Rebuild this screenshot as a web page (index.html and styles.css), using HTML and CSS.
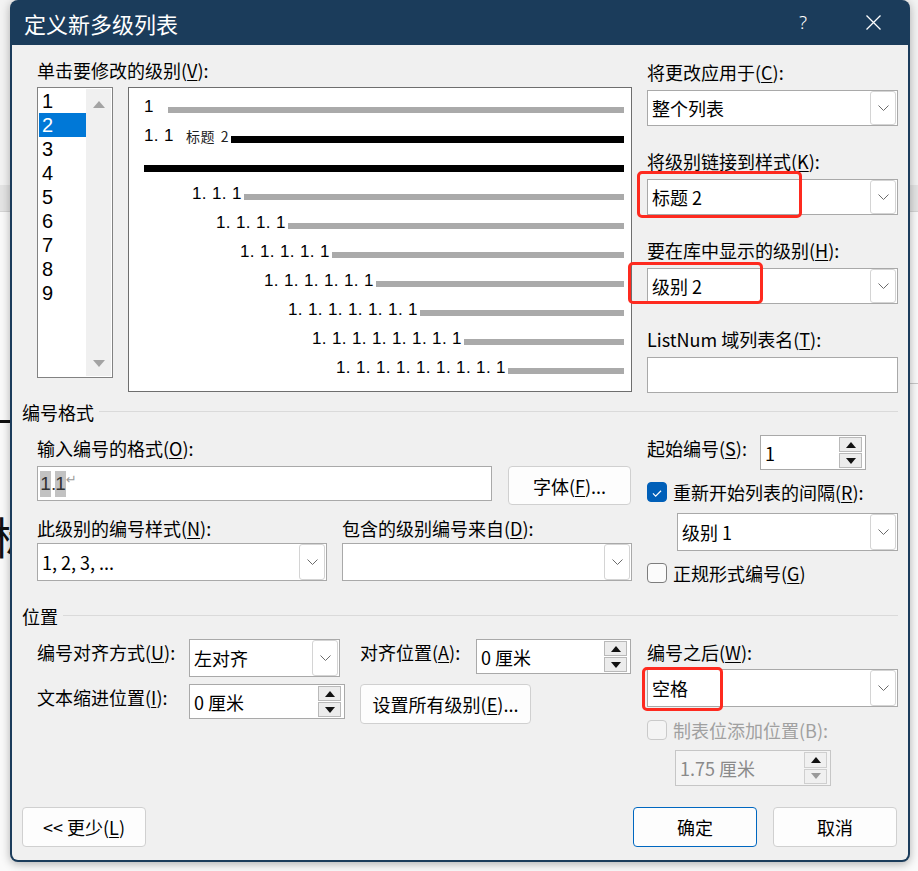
FILE: index.html
```html
<!DOCTYPE html>
<html lang="zh-CN">
<head>
<meta charset="utf-8">
<title>定义新多级列表</title>
<link rel="stylesheet" href="styles.css">
</head>
<body>
<div class="desk">
  <div class="bg-top"></div>
  <div class="bg-band"></div>
  <div class="bg-rule"></div>
  <div class="bg-char">标</div>
  <div class="bg-rline"></div>

  <div class="dialog">
    <div class="titlebar">
      <span class="title">定义新多级列表</span>
      <span class="tb-help">?</span>
      <span class="tb-close"><svg width="15" height="15" viewBox="0 0 15 15"><path d="M0.5 0.5L14.5 14.5M14.5 0.5L0.5 14.5" stroke="#fff" stroke-width="1.3" fill="none"/></svg></span>
    </div>

    <div class="body">
      <section class="top">
        <div class="top-left">
          <div class="lbl">单击要修改的级别(<u>V</u>):</div>
          <div class="levels">
            <div class="levlist">
              <div class="items">
                <div class="item">1</div>
                <div class="item sel">2</div>
                <div class="item">3</div>
                <div class="item">4</div>
                <div class="item">5</div>
                <div class="item">6</div>
                <div class="item">7</div>
                <div class="item">8</div>
                <div class="item">9</div>
              </div>
              <div class="vscroll"><span class="arr-up"></span><span class="arr-dn"></span></div>
            </div>
            <div class="preview">
              <div class="prow"><span class="pnum w24">1</span><span class="bar grey"></span></div>
              <div class="prow"><span class="pnum w42">1. 1</span><span class="pstyle">标题 2</span><span class="bar black"></span></div>
              <div class="prow"><span class="bar black"></span></div>
              <div class="prow i1"><span class="pnum">1. 1. 1</span><span class="bar grey"></span></div>
              <div class="prow i2"><span class="pnum">1. 1. 1. 1</span><span class="bar grey"></span></div>
              <div class="prow i3"><span class="pnum">1. 1. 1. 1. 1</span><span class="bar grey"></span></div>
              <div class="prow i4"><span class="pnum">1. 1. 1. 1. 1. 1</span><span class="bar grey"></span></div>
              <div class="prow i5"><span class="pnum">1. 1. 1. 1. 1. 1. 1</span><span class="bar grey"></span></div>
              <div class="prow i6"><span class="pnum">1. 1. 1. 1. 1. 1. 1. 1</span><span class="bar grey"></span></div>
              <div class="prow i7"><span class="pnum">1. 1. 1. 1. 1. 1. 1. 1. 1</span><span class="bar grey"></span></div>
            </div>
          </div>
        </div>

        <div class="top-right">
          <div class="field">
            <div class="lbl">将更改应用于(<u>C</u>):</div>
            <div class="combo"><span class="ctext">整个列表</span><span class="dd"><svg width="11" height="6" viewBox="0 0 11 6"><polyline points="0.5,0.5 5.5,5.5 10.5,0.5" fill="none" stroke="#6b6b6b" stroke-width="1"/></svg></span></div>
          </div>
          <div class="field">
            <div class="lbl">将级别链接到样式(<u>K</u>):</div>
            <div class="combo marked"><span class="ctext">标题 2</span><span class="dd"><svg width="11" height="6" viewBox="0 0 11 6"><polyline points="0.5,0.5 5.5,5.5 10.5,0.5" fill="none" stroke="#6b6b6b" stroke-width="1"/></svg></span><span class="redbox rb1"></span></div>
          </div>
          <div class="field">
            <div class="lbl">要在库中显示的级别(<u>H</u>):</div>
            <div class="combo marked"><span class="ctext">级别 2</span><span class="dd"><svg width="11" height="6" viewBox="0 0 11 6"><polyline points="0.5,0.5 5.5,5.5 10.5,0.5" fill="none" stroke="#6b6b6b" stroke-width="1"/></svg></span><span class="redbox rb2"></span></div>
          </div>
          <div class="field">
            <div class="lbl">ListNum 域列表名(<u>T</u>):</div>
            <div class="textbox listnum"></div>
          </div>
        </div>
      </section>

      <section class="group g-fmt">
        <div class="ghead"><span>编号格式</span><i class="gline"></i></div>
        <div class="gcols">
          <div class="gleft">
            <div class="lbl mt12">输入编号的格式(<u>O</u>):</div>
            <div class="fmtrow">
              <div class="textbox fmtbox"><span class="hl">1</span><span class="dot">.</span><span class="hl">1</span><span class="ret">↵</span></div>
              <div class="btn fontbtn">字体(<u>F</u>)...</div>
            </div>
            <div class="pair">
              <div>
                <div class="lbl">此级别的编号样式(<u>N</u>):</div>
                <div class="combo tall"><span class="ctext">1, 2, 3, ...</span><span class="dd"><svg width="11" height="6" viewBox="0 0 11 6"><polyline points="0.5,0.5 5.5,5.5 10.5,0.5" fill="none" stroke="#6b6b6b" stroke-width="1"/></svg></span></div>
              </div>
              <div>
                <div class="lbl">包含的级别编号来自(<u>D</u>):</div>
                <div class="combo tall"><span class="ctext"></span><span class="dd"><svg width="11" height="6" viewBox="0 0 11 6"><polyline points="0.5,0.5 5.5,5.5 10.5,0.5" fill="none" stroke="#6b6b6b" stroke-width="1"/></svg></span></div>
              </div>
            </div>
          </div>
          <div class="gright">
            <div class="startrow">
              <span class="lbl startlbl">起始编号(<u>S</u>):</span>
              <div class="spin startspin"><span class="stext">1</span><span class="sbtns"><span class="sb"><i class="up"></i></span><span class="sb"><i class="dn"></i></span></span></div>
            </div>
            <div class="chk-row"><span class="chk on"><svg width="20" height="20" viewBox="0 0 20 20"><polyline points="5.5,10.5 8.5,13.5 14.5,7.5" fill="none" stroke="#fff" stroke-width="1.3"/></svg></span><span>重新开始列表的间隔(<u>R</u>):</span></div>
            <div class="combo tall restart"><span class="ctext">级别 1</span><span class="dd"><svg width="11" height="6" viewBox="0 0 11 6"><polyline points="0.5,0.5 5.5,5.5 10.5,0.5" fill="none" stroke="#6b6b6b" stroke-width="1"/></svg></span></div>
            <div class="chk-row"><span class="chk"></span><span>正规形式编号(<u>G</u>)</span></div>
          </div>
        </div>
      </section>

      <section class="group g-pos">
        <div class="ghead"><span>位置</span><i class="gline"></i></div>
        <div class="gcols">
          <div class="posgrid">
            <div class="lbl plbl c1">编号对齐方式(<u>U</u>):</div>
            <div class="combo tall alignc c2"><span class="ctext">左对齐</span><span class="dd"><svg width="11" height="6" viewBox="0 0 11 6"><polyline points="0.5,0.5 5.5,5.5 10.5,0.5" fill="none" stroke="#6b6b6b" stroke-width="1"/></svg></span></div>
            <div class="lbl plbl c4">对齐位置(<u>A</u>):</div>
            <div class="spin c5"><span class="stext">0 厘米</span><span class="sbtns"><span class="sb"><i class="up"></i></span><span class="sb"><i class="dn"></i></span></span></div>
            <div class="lbl plbl c1">文本缩进位置(<u>I</u>):</div>
            <div class="spin c2"><span class="stext">0 厘米</span><span class="sbtns"><span class="sb"><i class="up"></i></span><span class="sb"><i class="dn"></i></span></span></div>
            <div class="btn allbtn c45">设置所有级别(<u>E</u>)...</div>
          </div>
          <div class="gright">
            <div class="lbl mt12">编号之后(<u>W</u>):</div>
            <div class="combo tall marked after"><span class="ctext">空格</span><span class="dd"><svg width="11" height="6" viewBox="0 0 11 6"><polyline points="0.5,0.5 5.5,5.5 10.5,0.5" fill="none" stroke="#6b6b6b" stroke-width="1"/></svg></span><span class="redbox rb3"></span></div>
            <div class="chk-row dis mt11"><span class="chk"></span><span>制表位添加位置(B):</span></div>
            <div class="spin disabled tabspin"><span class="stext">1.75 厘米</span><span class="sbtns"><span class="sb"><i class="up"></i></span><span class="sb"><i class="dn"></i></span></span></div>
          </div>
        </div>
      </section>

      <div class="footer">
        <div class="btn fbtn">&lt;&lt; 更少(<u>L</u>)</div>
        <div class="btn fbtn ok">确定</div>
        <div class="btn fbtn cancel">取消</div>
      </div>
    </div>
  </div>
</div>
</body>
</html>
```

FILE: styles.css
```css
* { box-sizing: border-box; }
html, body { margin: 0; padding: 0; }
body {
  width: 918px;
  height: 871px;
  overflow: hidden;
  font-family: "Noto Sans CJK SC", "Noto Sans", sans-serif;
  font-size: 18px;
  color: #000;
}
u { text-decoration-thickness: 1px; text-underline-offset: 2px; }

/* desktop behind the dialog */
.desk { position: relative; width: 918px; height: 871px; background: #fafafa; overflow: hidden; }
.bg-top { height: 185px; background: #f3f3f3; }
.bg-band { height: 27px; background: #e4e4e4; border-bottom: 1px solid #d4d4d4; }
.bg-rule { position: absolute; left: 0; top: 420px; width: 12px; height: 3px; background: #111; }
.bg-char { position: absolute; left: -9px; top: 514px; font-size: 44px; line-height: 1; color: #111; }
.bg-rline { position: absolute; right: 0; top: 383px; width: 12px; height: 1px; background: #c8c8c8; }

/* dialog frame */
.dialog {
  position: absolute;
  left: 10px;
  top: 0;
  width: 900px;
  height: 862px;
  background: #1b3c5b;
  border-radius: 8px;
  padding: 0 2px 2px;
  display: flex;
  flex-direction: column;
  box-shadow: 0 2px 10px rgba(0, 0, 0, 0.3);
}
.titlebar { height: 45px; flex: none; display: flex; align-items: center; color: #fff; }
.title { font-size: 22px; line-height: 1; padding-left: 12px; }
.tb-help { margin-left: auto; width: 70px; text-align: center; font-family: "Noto Sans", sans-serif; font-weight: 300; font-size: 19px; line-height: 1; }
.tb-close { width: 70px; display: flex; justify-content: center; align-items: center; }

.body { flex: 1; background: #f0f0f0; border-radius: 0 0 6px 6px; }

.lbl { line-height: 24px; white-space: nowrap; }

/* top section */
.top {
  height: 355px;
  display: grid;
  grid-template-columns: 595px 251px;
  column-gap: 15px;
  padding: 13px 10px 0 25px;
}
.levels { display: flex; gap: 15px; margin-top: 5px; }

.levlist {
  width: 76px;
  height: 291px;
  border: 1px solid #828282;
  background: #fff;
  display: flex;
  padding: 1px;
}
.items { width: 47px; }
.item {
  height: 24px;
  line-height: 24px;
  padding-left: 3px;
  font-family: "Liberation Sans", Arial, sans-serif;
  font-size: 20px;
}
.item.sel { background: #0078d7; color: #fff; }
.vscroll {
  width: 25px;
  background: #f0f0f0;
  display: flex;
  flex-direction: column;
  justify-content: space-between;
  align-items: center;
  padding: 12px 0 9px;
}
.arr-up { width: 0; height: 0; border-left: 6px solid transparent; border-right: 6px solid transparent; border-bottom: 7px solid #a3a3a3; }
.arr-dn { width: 0; height: 0; border-left: 6px solid transparent; border-right: 6px solid transparent; border-top: 7px solid #a3a3a3; }

.preview {
  width: 504px;
  height: 305px;
  border: 1px solid #6e6e6e;
  background: #fff;
  padding: 0 7px 0 15px;
}
.prow { height: 29px; display: flex; align-items: flex-end; }
.pnum {
  flex: none;
  font-family: "Liberation Sans", Arial, sans-serif;
  font-size: 17px;
  line-height: 20px;
  letter-spacing: 0.37px;
  white-space: pre;
  margin-right: 2px;
}
.pnum.w24 { width: 24px; margin-right: 0; }
.pnum.w42 { width: 42px; margin-right: 0; }
.pstyle { flex: none; font-size: 14px; line-height: 20px; margin-right: 2px; color: #222; letter-spacing: 0.5px; word-spacing: 2px; }
.bar { flex: 1; height: 6px; margin-bottom: 4px; }
.bar.grey { background: #aaaaaa; }
.bar.black { background: #000; height: 7px; margin-bottom: 3px; }
.prow.i1 { padding-left: 48px; }
.prow.i2 { padding-left: 72px; }
.prow.i3 { padding-left: 96px; }
.prow.i4 { padding-left: 120px; }
.prow.i5 { padding-left: 144px; }
.prow.i6 { padding-left: 168px; }
.prow.i7 { padding-left: 192px; }

.top-right { padding-top: 2px; display: flex; flex-direction: column; gap: 23px; }
.field { display: flex; flex-direction: column; gap: 6px; }

/* controls */
.combo {
  position: relative;
  height: 36px;
  border: 1px solid #a9a9a9;
  background: #fff;
  display: flex;
  align-items: center;
  padding-left: 4px;
}
.combo.tall { height: 38px; }
.ctext { flex: 1; white-space: nowrap; }
.dd {
  flex: none;
  width: 26px;
  align-self: stretch;
  margin: 0 1px 0 0;
  border: 1px solid #d4d4d4;
  border-radius: 3px;
  background: #fff;
  display: flex;
  align-items: center;
  justify-content: center;
}
.textbox { height: 36px; border: 1px solid #a9a9a9; background: #fff; }

.redbox {
  position: absolute;
  border: 3px solid #fe2a1f;
  border-radius: 5px;
  pointer-events: none;
}
.rb1 { left: -11px; top: -9px; width: 165px; height: 47px; }
.rb2 { left: -20px; top: -7px; width: 135px; height: 42px; }
.rb3 { left: -6px; top: -3px; width: 81px; height: 44px; }

.spin {
  height: 35px;
  border: 1px solid #a9a9a9;
  background: #fff;
  display: flex;
  align-items: center;
}
.stext { flex: 1; padding-left: 4px; white-space: nowrap; }
.sbtns {
  flex: none;
  width: 23px;
  align-self: stretch;
  margin: 1px 3px 1px 0;
  display: flex;
  flex-direction: column;
  gap: 1px;
}
.sb {
  flex: 1;
  background: #ececec;
  border: 1px solid #b9b9b9;
  display: flex;
  align-items: center;
  justify-content: center;
}
.sb .up { width: 0; height: 0; border-left: 5px solid transparent; border-right: 5px solid transparent; border-bottom: 6px solid #111; }
.sb .dn { width: 0; height: 0; border-left: 5px solid transparent; border-right: 5px solid transparent; border-top: 6px solid #111; }

.btn {
  display: flex;
  align-items: center;
  justify-content: center;
  background: #fdfdfd;
  border: 1px solid #d0d0d0;
  border-radius: 4px;
  white-space: nowrap;
}

.chk-row { display: flex; align-items: center; gap: 6px; height: 24px; margin-top: 10px; }
.chk {
  flex: none;
  width: 20px;
  height: 20px;
  border: 1px solid #7d7d7d;
  border-radius: 4px;
  background: #fbfbfb;
  display: flex;
}
.chk.on { background: #005fb8; border-color: #005fb8; }
.chk-row.dis { color: #a0a0a0; }
.chk-row.dis .chk { border-color: #cacaca; background: #f4f4f4; }

/* groups */
.group { padding: 0 10px; }
.g-fmt { height: 204px; }
.g-pos { height: 203px; }
.ghead { display: flex; align-items: center; height: 24px; line-height: 24px; }
.gline { flex: 1; height: 1px; background: #dadada; margin-left: 5px; margin-top: -2px; }
.gcols { display: grid; grid-template-columns: 595px 251px; column-gap: 15px; padding-left: 15px; }

.mt12 { margin-top: 12px; }
.mt11 { margin-top: 11px; }

.fmtrow { display: flex; align-items: flex-start; margin-top: 6px; }
.fmtbox {
  width: 455px;
  height: 35px;
  display: flex;
  align-items: center;
  padding-left: 2px;
  font-family: "Liberation Sans", Arial, sans-serif;
  font-size: 19px;
  color: #333;
}
.hl { display: inline-block; background: #c2c2c2; width: 11px; height: 26px; line-height: 26px; text-align: center; }
.dot { display: inline-block; width: 4px; line-height: 26px; }
.ret { font-family: "DejaVu Sans", sans-serif; font-size: 13px; color: #9a9a9a; align-self: flex-start; margin-top: 5px; }
.fontbtn { width: 123px; height: 39px; margin-left: 16px; }

.pair { display: grid; grid-template-columns: 290px 290px; column-gap: 15px; margin-top: 11px; }
.pair .combo { margin-top: 3px; }

.startrow { display: flex; align-items: flex-start; margin-top: 11px; }
.startlbl { width: 113px; margin-top: 1px; }
.startspin { width: 106px; }
.restart { margin-left: 30px; margin-top: 9px; }

.posgrid {
  display: grid;
  grid-template-columns: 152px 156px 15px 116px 156px;
  grid-template-rows: 38px 40px;
  row-gap: 7px;
  align-items: start;
  margin-top: 11px;
}
.plbl { margin-top: 1px; }
.c1 { grid-column: 1; }
.c2 { grid-column: 2; }
.c4 { grid-column: 4; }
.c5 { grid-column: 5; width: 155px; }
.c45 { grid-column: 4 / span 2; }
.alignc { width: 151px; }
.posgrid .spin.c2 { width: 156px; }
.allbtn { width: 171px; height: 40px; }

.after { margin-top: 5px; }
.tabspin { margin-left: 28px; margin-top: 8px; width: 156px; height: 36px; }
.spin.disabled { background: #f4f4f4; border-color: #c6c6c6; color: #8a8a8a; }
.spin.disabled .sb { background: #f0f0f0; border-color: #cfcfcf; }
.spin.disabled .sb .dn { border-top-color: #9a9a9a; }

.footer { display: flex; height: 40px; padding: 0 11px 0 10px; }
.fbtn { width: 124px; height: 40px; }
.fbtn.ok { margin-left: auto; border-color: #0067c0; }
.fbtn.cancel { margin-left: 16px; }
```
